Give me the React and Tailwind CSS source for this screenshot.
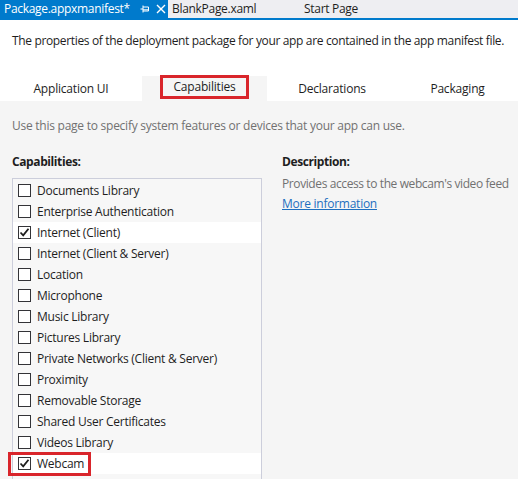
import React from 'react';

const capabilities = [
   { name: 'Documents Library', checked: false },
   { name: 'Enterprise Authentication', checked: false },
   { name: 'Internet (Client)', checked: true },
   { name: 'Internet (Client & Server)', checked: false },
   { name: 'Location', checked: false },
   { name: 'Microphone', checked: false },
   { name: 'Music Library', checked: false },
   { name: 'Pictures Library', checked: false },
   { name: 'Private Networks (Client & Server)', checked: false },
   { name: 'Proximity', checked: false },
   { name: 'Removable Storage', checked: false },
   { name: 'Shared User Certificates', checked: false },
   { name: 'Videos Library', checked: false },
   { name: 'Webcam', checked: true, highlight: true },
];

const CheckBox = ({ checked }) => (
   <span className="w-[13px] h-[13px] border border-[#333337] bg-white flex items-center justify-center shrink-0">
      {checked && (
         <svg width="11" height="11" viewBox="0 0 11 11">
            <path d="M1.5 5.5 L4.2 8.3 L9.5 1.8" fill="none" stroke="#1e1e1e" strokeWidth="1.8" />
         </svg>
      )}
   </span>
);

const App = () => {
   return (
      <div className="w-[518px] h-[479px] overflow-hidden bg-white text-[#1e1e1e] font-['Open_Sans',sans-serif]">
         {/* document tabs */}
         <div className="flex h-[18px] bg-[#eeeef2] text-[12px] leading-[18px] tracking-[-0.3px] whitespace-nowrap">
            <div className="w-[168px] bg-[#007acc] text-white flex items-center pl-[4px]">
               <span className="w-[127px]">Package.appxmanifest*</span>
               <svg className="ml-[9px] shrink-0" width="10" height="10" viewBox="0 0 10 10">
                  <path d="M0.5 5 H3 M3 1.5 V8.5 M3 3 H8.5 V7 H3 M3 5.8 H8.5" fill="none" stroke="#ffffff" strokeWidth="1" />
               </svg>
               <svg className="ml-[6px] shrink-0" width="10" height="10" viewBox="0 0 10 10">
                  <path d="M1 1 L9 9 M9 1 L1 9" stroke="#ffffff" strokeWidth="1.4" />
               </svg>
            </div>
            <div className="w-[132px] pl-[4px]">BlankPage.xaml</div>
            <div className="pl-[4px]">Start Page</div>
         </div>
         <div className="h-[2px] bg-[#007acc]" />

         <p className="px-3 pt-[12px] h-[56px] text-[12px] tracking-[-0.35px]">
            The properties of the deployment package for your app are contained in the app manifest file.
         </p>

         {/* designer tabs */}
         <div className="flex h-[25px] text-[12px] tracking-[-0.2px]">
            <div className="w-[142px] flex items-center justify-center">Application UI</div>
            <div className="w-[125px] bg-[#f5f5f5] flex items-start justify-center">
               <span className="border-[3px] border-[#d9252b] px-[10px] h-[24px] -mt-[1px] leading-[18px] flex items-center">Capabilities</span>
            </div>
            <div className="w-[130px] flex items-center justify-center">Declarations</div>
            <div className="flex-1 flex items-center justify-center">Packaging</div>
         </div>

         <div className="bg-[#f5f5f5] h-[378px] px-3 text-[12px] tracking-[-0.25px]">
            <p className="pt-[16px] text-[#717171]">Use this page to specify system features or devices that your app can use.</p>

            <div className="flex mt-[19px]">
               <div className="w-[250px] shrink-0">
                  <h3 className="font-bold leading-[16px] tracking-[-0.4px]">Capabilities:</h3>
                  <div className="mt-[8px] border border-[#cccedb] bg-[#f7f7f7] pt-[1px] h-[320px]">
                     {capabilities.map(cap => (
                        <div
                           key={cap.name}
                           className={`h-[21px] flex items-center ${cap.checked ? 'bg-white' : ''}`}
                        >
                           <div className={`flex items-center gap-[6px] h-[24px] ${cap.highlight ? 'border-[3px] border-[#d9252b] -ml-[5px] pl-[7px] pr-[4px] relative' : 'pl-[5px]'}`}>
                              <CheckBox checked={cap.checked} />
                              <span>{cap.name}</span>
                           </div>
                        </div>
                     ))}
                  </div>
               </div>

               <div className="pl-[20px] whitespace-nowrap">
                  <h3 className="font-bold leading-[16px] tracking-[-0.4px]">Description:</h3>
                  <p className="mt-[5px] text-[#717171] tracking-[-0.4px]">Provides access to the webcam's video feed</p>
                  <a className="block mt-[2px] text-[#1e6fc0] underline">More information</a>
               </div>
            </div>
         </div>
      </div>
   );
};

export default App;
